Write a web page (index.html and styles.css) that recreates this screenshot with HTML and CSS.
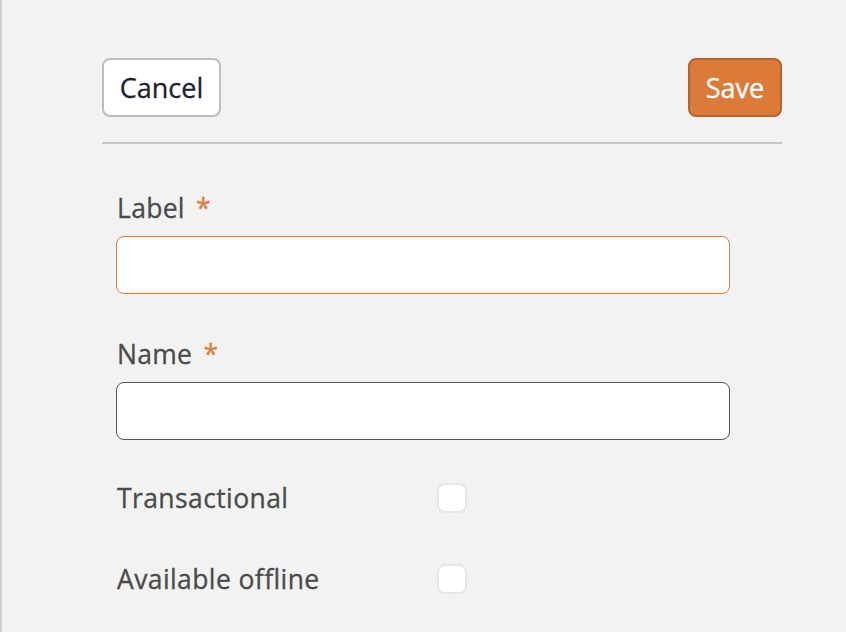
FILE: index.html
```html
<!DOCTYPE html>
<html>
<head>
<meta charset="utf-8">
<link rel="stylesheet" href="styles.css">
</head>
<body>
<div class="panel">
  <div class="toolbar">
    <button class="btn btn-cancel">Cancel</button>
    <button class="btn btn-save">Save</button>
  </div>
  <form class="form">
    <div class="field">
      <label class="field-label">Label <span class="req">*</span></label>
      <input class="text-input focused" type="text">
    </div>
    <div class="field">
      <label class="field-label">Name <span class="req">*</span></label>
      <input class="text-input" type="text">
    </div>
    <div class="check-row">
      <span class="check-label">Transactional</span>
      <span class="checkbox"></span>
    </div>
    <div class="check-row">
      <span class="check-label">Available offline</span>
      <span class="checkbox"></span>
    </div>
  </form>
</div>
</body>
</html>
```

FILE: styles.css
```css
html, body {
  margin: 0;
  padding: 0;
  height: 100%;
}
body {
  background: #f2f2f2;
  font-family: "Open Sans", "Noto Sans", sans-serif;
  border-left: 2px solid #cfcfcf;
  box-sizing: border-box;
  overflow: hidden;
}
.panel {
  width: 680px;
  padding: 58px 0 0 100px;
}
.toolbar {
  display: flex;
  justify-content: space-between;
  align-items: center;
  padding-bottom: 25px;
  border-bottom: 2px solid #c9c9cc;
}
.btn {
  height: 59px;
  border-radius: 8px;
  font-family: inherit;
  font-size: 27px;
  -webkit-text-stroke: 0.3px currentColor;
  padding: 0;
  cursor: pointer;
}
.btn-cancel {
  width: 119px;
  background: #ffffff;
  border: 2px solid #bdbdbd;
  color: #1f2130;
}
.btn-save {
  width: 94px;
  background: #dc7a39;
  border: 2px solid #b9622b;
  color: #ffffff;
}
.form {
  padding: 0 52px 0 14px;
}
.field {
  display: flex;
  flex-direction: column;
}
.field:first-child {
  margin-top: 47px;
}
.field + .field {
  margin-top: 43px;
}
.field-label {
  font-size: 26.5px;
  letter-spacing: 0.3px;
  -webkit-text-stroke: 0.3px currentColor;
  color: #4a4a4a;
  line-height: 34px;
  margin-bottom: 11px;
  padding-left: 1px;
}
.req {
  color: #e07b39;
  margin-left: 4px;
}
.text-input {
  height: 58px;
  box-sizing: border-box;
  border: 1px solid #555555;
  border-radius: 8px;
  background: #ffffff;
  outline: none;
  font-family: inherit;
  font-size: 24px;
  padding: 0 14px;
  margin: 0;
}
.text-input.focused {
  border-color: #e07b39;
}
.check-row {
  display: flex;
  align-items: center;
  height: 30px;
}
.check-row:nth-child(3) {
  margin-top: 43px;
}
.check-row + .check-row {
  margin-top: 51px;
}
.check-label {
  width: 320px;
  font-size: 26.5px;
  letter-spacing: 0.4px;
  -webkit-text-stroke: 0.3px currentColor;
  color: #4a4a4a;
  padding-left: 1px;
}
.checkbox {
  width: 30px;
  height: 30px;
  box-sizing: border-box;
  background: #ffffff;
  border: 2px solid #e6e6e6;
  border-radius: 8px;
}
```
